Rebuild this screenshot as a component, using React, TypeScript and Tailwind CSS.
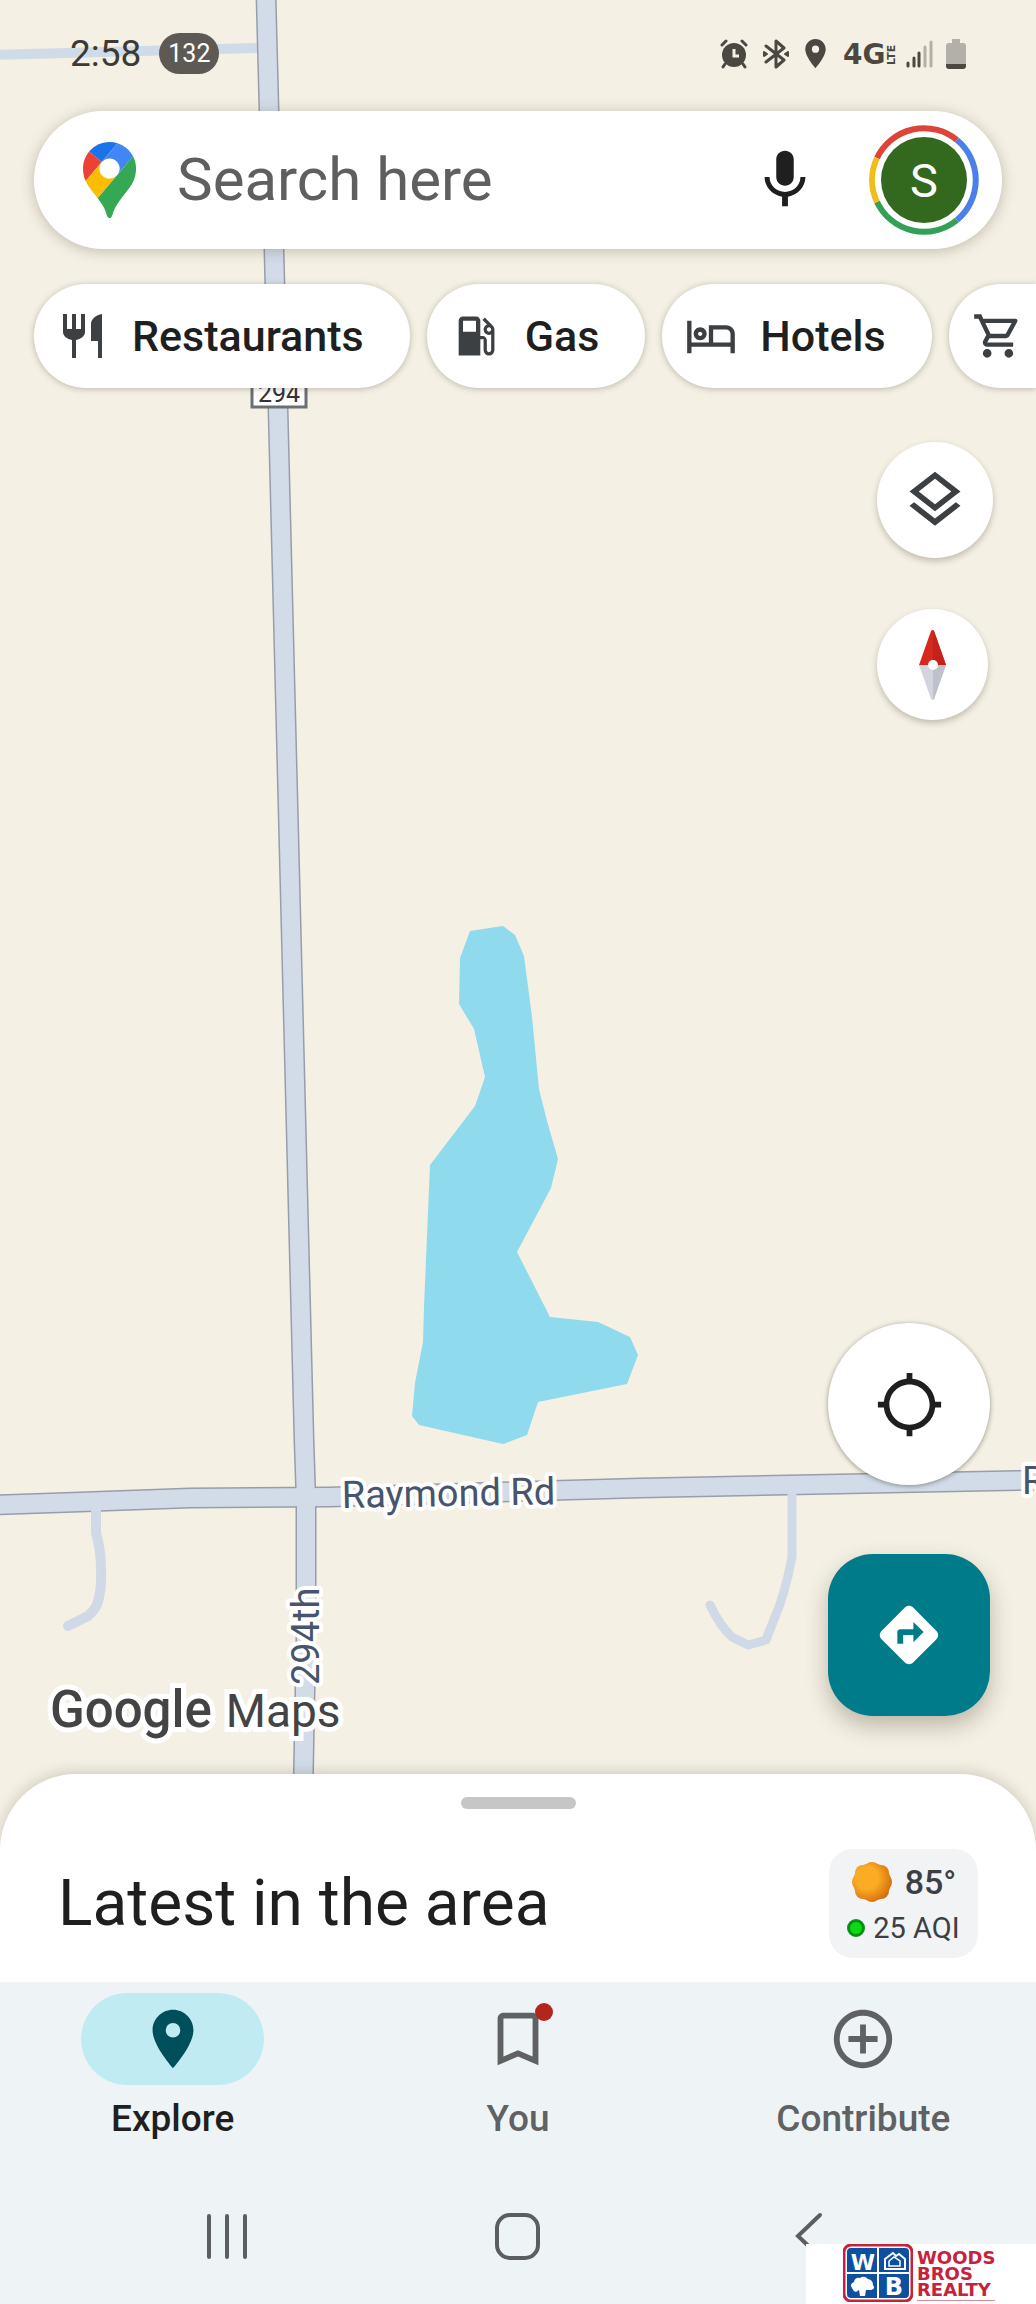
import { useState } from 'react';
import type { ReactNode } from 'react';
import {
  MdAddCircleOutline,
  MdBookmarkBorder,
  MdDirections,
  MdLocalGasStation,
  MdLocationOn,
  MdLocationSearching,
  MdMic,
  MdOutlineHotel,
  MdOutlineLayers,
  MdOutlineShoppingCart,
} from 'react-icons/md';

const VERTICAL_ROAD = 'M266 -5 L269 110 L274 250 L278 408 L304 1440 L306 1500 L306 1640 L301 1900';
const RAYMOND_ROAD = 'M-5 1505 L80 1502 L190 1498 L330 1497 L640 1488 L1045 1480';
const FARM_ROAD = 'M-5 55 L258 48';
const WEST_DRIVE = 'M96 1506 L96 1533 Q101 1550 101 1570 Q102 1590 97 1605 Q93 1612 88 1616 L68 1626';
const EAST_DRIVE = 'M792 1490 L792 1557 Q785 1595 773 1622 L766 1640 L748 1645 L732 1637 Q720 1626 710 1605';
const POND =
  '470,931 503,926 515,935 524,956 532,1017 539,1089 547,1121 558,1159 551,1188 517,1252 550,1317 598,1322 630,1337 638,1355 627,1384 538,1402 527,1435 503,1444 419,1425 412,1416 415,1383 423,1342 424,1307 430,1165 475,1106 485,1077 474,1029 459,1004 460,958';

const MapCanvas = () => (
  <svg
    className="absolute inset-0 h-full w-full"
    viewBox="0 0 1036 2304"
    preserveAspectRatio="xMidYMin slice"
    role="img"
    aria-label="Map"
  >
    <polygon points={POND} fill="#90daee" />
    <g fill="none" strokeLinejoin="round">
      <path d={FARM_ROAD} stroke="#d0dbe8" strokeWidth="10" />
      <path d={VERTICAL_ROAD} stroke="#969eab" strokeWidth="21" />
      <path d={RAYMOND_ROAD} stroke="#969eab" strokeWidth="21" />
      <path d={WEST_DRIVE} stroke="#d0dae6" strokeWidth="10" strokeLinecap="round" />
      <path d={EAST_DRIVE} stroke="#d0dae6" strokeWidth="9" strokeLinecap="round" />
      <path d={VERTICAL_ROAD} stroke="#d2dce8" strokeWidth="18" />
      <path d={RAYMOND_ROAD} stroke="#d2dce8" strokeWidth="18" />
    </g>
    <rect x="252" y="374" width="54" height="33" fill="#fff" stroke="#6b6e72" strokeWidth="3" />
    <text x="279" y="402" textAnchor="middle" className="font-[Roboto,sans-serif] text-[25px]" fill="#333">
      294
    </text>
    <g
      className="font-[Roboto,sans-serif] text-[38px]"
      fill="#46556b"
      stroke="#fff"
      strokeWidth="8"
      strokeLinejoin="round"
      paintOrder="stroke"
    >
      <text transform="translate(342 1508) rotate(-1)">Raymond Rd</text>
      <text transform="translate(319 1685) rotate(-90)">294th</text>
      <text x="1022" y="1494">Raymond Rd</text>
    </g>
  </svg>
);

const AlarmIcon = () => (
  <svg className="h-[30px] w-[28px]" viewBox="0 0 28 30" fill="none" stroke="#4b4841" strokeLinecap="round">
    <circle cx="14" cy="16" r="12" fill="#4b4841" stroke="none" />
    <path d="M2 6l4-4M26 6l-4-4" strokeWidth="3" />
    <path d="M5 25l-2 3M23 25l2 3" strokeWidth="3" />
    <path d="M14 10v7h5" stroke="#f4f0e4" strokeWidth="3" strokeLinecap="butt" />
  </svg>
);

const BluetoothIcon = () => (
  <svg className="h-[30px] w-[28px]" viewBox="0 0 28 30" fill="none" stroke="#4b4841" strokeWidth="3" strokeLinecap="round" strokeLinejoin="round">
    <path d="M4 7l18 14-8 7V2l8 7L4 23" />
    <path d="M2 13l3 2-3 2zM26 13l-3 2 3 2z" strokeWidth="2" fill="#4b4841" />
  </svg>
);

const NetworkIcon = () => (
  <svg className="h-[30px] w-[54px] overflow-visible" viewBox="0 0 54 30" fill="#4b4841" aria-label="4G LTE">
    <text x="0" y="25" className="font-['DejaVu_Sans',sans-serif] text-[28px] font-bold">4G</text>
    <text transform="translate(52 26) rotate(-90)" className="font-['DejaVu_Sans',sans-serif] text-[11px] font-bold">LTE</text>
  </svg>
);

const SignalIcon = () => (
  <svg className="h-[30px] w-[27px]" viewBox="0 0 27 30" strokeWidth="3" strokeLinecap="round">
    <path d="M2 24v3M8 19v8M13 14v13" stroke="#4b4841" />
    <path d="M19 8v19M25 3v24" stroke="#b3b0a7" />
  </svg>
);

const BatteryIcon = () => (
  <svg className="h-[30px] w-[20px]" viewBox="0 0 20 30">
    <path d="M6 0h8v4h3a3 3 0 0 1 3 3v18H0V7a3 3 0 0 1 3-3h3z" fill="#b3b0a7" />
    <path d="M0 25h20v2a3 3 0 0 1-3 3H3a3 3 0 0 1-3-3z" fill="#4b4841" />
  </svg>
);

const StatusBar = () => (
  <div className="flex h-[111px] items-center justify-between pr-[70px] pb-1 pl-[70px]">
    <div className="flex items-center gap-[18px]">
      <span className="text-[37px] text-[#3d3a35]">2:58</span>
      <span className="flex h-[41px] w-[60px] items-center justify-center rounded-full bg-[#5d5a55] text-[25px] text-white">
        132
      </span>
    </div>
    <div className="flex items-center">
      <div className="mr-[14px]"><AlarmIcon /></div>
      <BluetoothIcon />
      <MdLocationOn className="mr-[10px] ml-2 size-[35px] text-[#4b4841]" />
      <NetworkIcon />
      <div className="mr-[13px] ml-[9px]"><SignalIcon /></div>
      <BatteryIcon />
    </div>
  </div>
);

const MapsPin = () => (
  <svg className="h-[76px] w-[53px]" viewBox="0 0 92.3 132.3">
    <path fill="#1a73e8" d="M60.2 2.2C55.8.8 51 0 46.1 0 32 0 19.3 6.4 10.8 16.5l21.8 18.3L60.2 2.2z" />
    <path fill="#ea4335" d="M10.8 16.5C4.1 24.5 0 34.9 0 46.1c0 8.7 1.7 15.7 4.6 22l28-33.3-21.8-18.3z" />
    <path fill="#4285f4" d="M46.2 28.5c9.8 0 17.7 7.9 17.7 17.7 0 4.3-1.6 8.3-4.2 11.4 0 0 13.9-16.6 27.5-32.7-5.6-10.8-15.3-19-27-22.7L32.6 34.8c3.3-3.8 8.1-6.3 13.6-6.3" />
    <path fill="#fbbc04" d="M46.2 63.8c-9.8 0-17.7-7.9-17.7-17.7 0-4.3 1.5-8.3 4.1-11.3l-28 33.3c4.8 10.6 12.8 19.2 21 29.9l34.1-40.5c-3.3 3.9-8.1 6.3-13.5 6.3" />
    <path fill="#34a853" d="M59.1 109.2c15.4-24.1 33.3-35 33.3-63 0-7.7-1.9-14.9-5.2-21.3L25.6 98c2.6 3.4 5.3 7.3 7.9 11.3 9.4 14.5 6.8 23.1 12.8 23.1s3.4-8.7 12.8-23.2" />
  </svg>
);

const Avatar = () => (
  <button type="button" aria-label="Account" className="size-[112px]">
    <svg viewBox="0 0 112 112" fill="none" strokeWidth="6">
      <path d="M9 34A52 52 0 0 1 89 16" stroke="#db4437" />
      <path d="M89 16A52 52 0 0 1 89 96" stroke="#4a80e8" />
      <path d="M89 96A52 52 0 0 1 9 78" stroke="#34a055" />
      <path d="M9 78A52 52 0 0 1 9 34" stroke="#f2bc1b" />
      <circle cx="56" cy="56" r="43" fill="#33691e" />
      <text x="56" y="73" textAnchor="middle" fill="#fff" className="text-[47px]">S</text>
    </svg>
  </button>
);

const SearchBar = () => (
  <form className="mx-[34px] flex h-[138px] items-center rounded-full bg-white pr-[22px] pl-[49px] shadow-[0_2px_14px_rgba(60,50,30,0.28)]">
    <MapsPin />
    <input
      type="text"
      aria-label="Search here"
      placeholder="Search here"
      className="ml-[41px] min-w-0 flex-1 bg-transparent text-[60px] text-[#1f1f1f] outline-none placeholder:text-[#5f5f5f]"
    />
    <button type="button" aria-label="Voice search" className="mr-[48px]">
      <MdMic className="size-[70px] text-[#1f1f1f]" />
    </button>
    <Avatar />
  </form>
);

const ForkKnifeIcon = () => (
  <svg className="size-[52px]" viewBox="0 0 52 52" fill="#3c4043">
    <path d="M6 4h4v15h5V4h4v15h5V4h4v18c0 4-4 7-9 8v18h-4V30c-5-1-9-4-9-8z" />
    <path d="M45 4v44h-4V31h-7V14c0-5 5-9 11-10z" />
  </svg>
);

const chips: { label: string; icon: ReactNode }[] = [
  { label: 'Restaurants', icon: <ForkKnifeIcon /> },
  { label: 'Gas', icon: <MdLocalGasStation className="size-[52px]" /> },
  { label: 'Hotels', icon: <MdOutlineHotel className="size-[52px]" /> },
];

const CategoryChips = () => (
  <div className="mt-[35px] flex gap-[17px] pl-[34px]">
    {chips.map((chip) => (
      <button
        key={chip.label}
        type="button"
        className="flex h-[104px] shrink-0 items-center gap-[23px] rounded-full bg-white pr-[46px] pl-[23px] text-[43px] font-medium text-[#1f1f1f] shadow-[0_1px_6px_rgba(60,50,30,0.3)]"
      >
        <span className="text-[#3c4043]">{chip.icon}</span>
        {chip.label}
      </button>
    ))}
    <button
      type="button"
      aria-label="Shopping"
      className="flex h-[104px] min-w-[86px] flex-1 items-center rounded-l-full bg-white pl-[23px] shadow-[0_1px_6px_rgba(60,50,30,0.3)]"
    >
      <MdOutlineShoppingCart className="size-[52px] text-[#3c4043]" />
    </button>
  </div>
);

const CompassIcon = () => (
  <svg className="h-[70px] w-[27px]" viewBox="0 0 27 70">
    <path d="M12 1q2-2 3 0l12 34H0z" fill="#d5281f" />
    <path d="M14 0l1 1 12 34H14z" fill="#c5221b" />
    <path d="M0 35h27L15 69q-1 2-3 0z" fill="#d3d5de" />
    <path d="M14 35h13L15 69l-1 1z" fill="#bfc1ca" />
    <circle cx="14" cy="35" r="5" fill="#fff" />
  </svg>
);

const MapControls = () => (
  <div className="mt-[54px] mr-[43px] flex flex-col items-start gap-[51px] self-end">
    <button
      type="button"
      aria-label="Map layers"
      className="flex size-[116px] items-center justify-center rounded-full bg-white shadow-[0_3px_6px_rgba(60,50,30,0.28)]"
    >
      <MdOutlineLayers className="size-[68px] text-[#3c4043]" />
    </button>
    <button
      type="button"
      aria-label="Compass"
      className="flex size-[111px] items-center justify-center rounded-full bg-white shadow-[0_3px_6px_rgba(60,50,30,0.28)]"
    >
      <CompassIcon />
    </button>
  </div>
);

const MapFooter = () => (
  <div className="mt-auto flex items-end justify-between pr-[46px] pb-[58px] pl-[50px]">
    <div className="-mb-[25px] flex items-baseline gap-[14px] text-[#444] [paint-order:stroke_fill] [-webkit-text-stroke:10px_#fff]">
      <span className="text-[51px] leading-[60px] font-medium">Google</span>
      <span className="text-[46px] leading-[60px]">Maps</span>
    </div>
    <div className="flex flex-col gap-[69px]">
      <button
        type="button"
        aria-label="Your location"
        className="flex size-[162px] items-center justify-center rounded-full bg-white shadow-[0_1px_5px_rgba(40,35,20,0.45)]"
      >
        <MdLocationSearching className="size-[69px] text-[#1f1f1f]" />
      </button>
      <button
        type="button"
        aria-label="Directions"
        className="flex size-[162px] items-center justify-center rounded-[45px] bg-[#007b8a] shadow-[0_10px_22px_rgba(60,50,30,0.3)]"
      >
        <MdDirections className="size-[70px] text-white" />
      </button>
    </div>
  </div>
);

const sunBumps = [
  [33, 21],
  [30, 30],
  [21, 33],
  [12, 30],
  [9, 21],
  [12, 12],
  [21, 9],
  [30, 12],
];

const SunIcon = () => (
  <svg className="size-[42px]" viewBox="0 0 42 42">
    <defs>
      <radialGradient id="sun" gradientUnits="userSpaceOnUse" cx="16" cy="17" r="28">
        <stop offset="0.4" stopColor="#fbab24" />
        <stop offset="1" stopColor="#cf650c" />
      </radialGradient>
    </defs>
    <g fill="url(#sun)">
      <circle cx="21" cy="21" r="19" />
      {sunBumps.map(([cx, cy]) => (
        <circle key={`${cx}-${cy}`} cx={cx} cy={cy} r="8" />
      ))}
    </g>
  </svg>
);

const AreaSheet = () => (
  <section className="relative flex flex-col rounded-t-[76px] bg-white pr-[58px] pb-6 pl-[58px] shadow-[0_-2px_14px_rgba(60,50,30,0.2)]">
    <div className="mt-[23px] h-3 w-[115px] self-center rounded-full bg-[#c6c6c6]" />
    <div className="mt-10 flex items-center justify-between">
      <h1 className="text-[64px] leading-[72px] text-[#1f1f1f]">Latest in the area</h1>
      <div className="flex h-[109px] w-[149px] flex-col items-center justify-center rounded-3xl bg-[#f1f3f5] text-[#3c4043]">
        <div className="flex items-center gap-3">
          <SunIcon />
          <span className="text-[34px] leading-[48px] font-medium">85°</span>
        </div>
        <div className="flex items-center gap-2">
          <span className="size-[18px] rounded-full border-3 border-[#0a8f14] bg-[#0bdc12]" />
          <span className="text-[29px] leading-[44px]">25 AQI</span>
        </div>
      </div>
    </div>
  </section>
);

const tabs = [
  { label: 'Explore', Icon: MdLocationOn, badge: false },
  { label: 'You', Icon: MdBookmarkBorder, badge: true },
  { label: 'Contribute', Icon: MdAddCircleOutline, badge: false },
];

const TabBar = () => {
  const [active, setActive] = useState('Explore');

  return (
    <nav className="grid grid-cols-3 pt-[11px]">
      {tabs.map(({ label, Icon, badge }) => (
        <button
          key={label}
          type="button"
          onClick={() => setActive(label)}
          className={
            active === label
              ? 'flex flex-col items-center gap-3 text-[#1f1f1f]'
              : 'flex flex-col items-center gap-3 text-[#5f6163]'
          }
        >
          <span
            className={
              active === label
                ? 'relative flex h-[92px] w-[183px] items-center justify-center rounded-full bg-[#c1ebf3] text-[#00505c]'
                : 'relative flex h-[92px] w-[183px] items-center justify-center rounded-full'
            }
          >
            <Icon className="size-[70px]" />
            {badge && <span className="absolute top-[10px] right-[56px] size-[18px] rounded-full bg-[#b3261e]" />}
          </span>
          <span className="text-[37px] leading-[44px] font-medium">{label}</span>
        </button>
      ))}
    </nav>
  );
};

const SystemNav = () => (
  <div className="mt-[65px] grid grid-cols-3 justify-items-center px-[82px] pb-[38px]">
    <button type="button" aria-label="Recent apps">
      <svg className="h-[60px] w-[50px]" viewBox="0 0 50 60" stroke="#5b5d5f" strokeWidth="4" strokeLinecap="round">
        <path d="M7 10v41M25 10v41M43 10v41" />
      </svg>
    </button>
    <button type="button" aria-label="Home">
      <svg className="h-[60px] w-[50px]" viewBox="0 0 50 60" fill="none" stroke="#5b5d5f" strokeWidth="4">
        <rect x="4" y="9" width="41" height="43" rx="13" />
      </svg>
    </button>
    <button type="button" aria-label="Back">
      <svg className="h-[60px] w-[50px]" viewBox="0 0 50 60" fill="none" stroke="#5b5d5f" strokeWidth="4" strokeLinecap="round">
        <path d="M36 9L14 30l22 21" />
      </svg>
    </button>
  </div>
);

const Watermark = () => (
  <div className="absolute right-0 bottom-0 flex h-[60px] w-[230px] items-start gap-1 bg-white pl-[37px]">
    <svg className="h-[58px] w-[70px] shrink-0" viewBox="0 0 70 58">
      <rect x="1" y="1" width="68" height="56" rx="7" fill="#fff" stroke="#c8213c" strokeWidth="3" />
      <rect x="4" y="4" width="62" height="50" rx="4" fill="#0f4f9f" />
      <path d="M35 4v50M4 29h62" stroke="#fff" strokeWidth="2" />
      <g fill="#fff" className="font-['DejaVu_Sans',sans-serif] text-[24px] font-bold">
        <text x="20" y="26" textAnchor="middle" className="text-[22px]">W</text>
        <text x="51" y="51" textAnchor="middle">B</text>
      </g>
      <path d="M42 25V15l8-6 3 3 3-2 6 5v10z" fill="none" stroke="#fff" strokeWidth="2" />
      <path d="M46 22v-5l5-4 6 4v5z" fill="none" stroke="#fff" strokeWidth="1.5" />
      <path d="M9 44q-3-4 2-6 1-5 6-4 4-3 8 1 5 1 5 6 3 4-2 5h-5l-1 6h-5l-1-6-3 2q-3-1-4-4z" fill="#fff" />
    </svg>
    <div className="mt-[6px] border-b border-[#d98a98] pb-[2px] font-['DejaVu_Sans',sans-serif] text-[18px] leading-4 font-bold text-[#c8213c]">
      <p>WOODS</p>
      <p>BROS</p>
      <p>REALTY</p>
    </div>
  </div>
);

export default function App() {
  return (
    <div className="relative flex min-h-screen flex-col overflow-hidden bg-[#f4f0e4] font-[Roboto,sans-serif]">
      <MapCanvas />
      <main className="relative flex flex-1 flex-col">
        <StatusBar />
        <SearchBar />
        <CategoryChips />
        <MapControls />
        <MapFooter />
      </main>
      <AreaSheet />
      <footer className="relative bg-[#eef4f6]">
        <TabBar />
        <SystemNav />
        <Watermark />
      </footer>
    </div>
  );
}
